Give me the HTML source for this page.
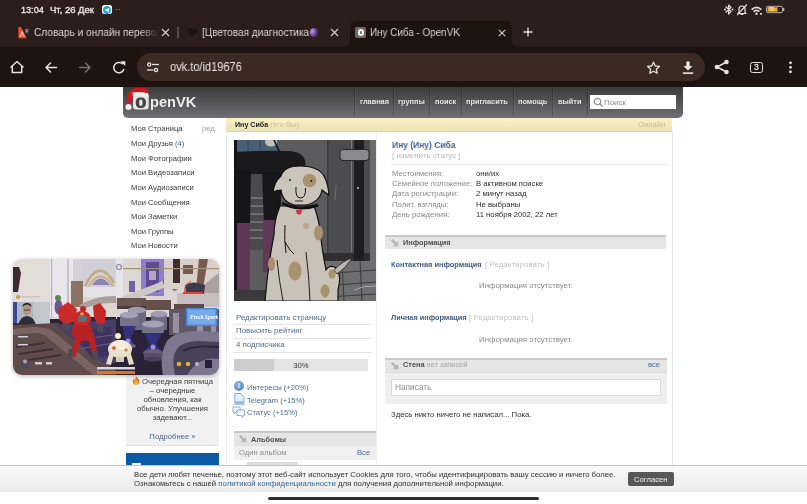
<!DOCTYPE html>
<html><head><meta charset="utf-8">
<style>
*{margin:0;padding:0;box-sizing:border-box}
html,body{width:807px;height:504px;overflow:hidden;background:#fff;font-family:"Liberation Sans",sans-serif;position:relative;-webkit-font-smoothing:antialiased}
.t{will-change:transform}
.r{position:absolute;display:block}
.t{position:absolute;white-space:nowrap;line-height:12px}
.tabt{color:#ddd4d0;line-height:13px;overflow:hidden}
</style></head><body>
<div class="r" style="left:0px;top:0px;width:807px;height:47px;background:#2c1f1b;"></div>
<div class="r" style="left:0px;top:46.6px;width:807px;height:40.4px;background:#1d1310;"></div>
<div class="r" style="left:350px;top:21px;width:162px;height:26px;background:#1d1310;border-radius:6px 6px 0 0"></div>
<svg class="r" style="left:343px;top:39px" width="8" height="8"><path d="M0 8 Q7 8 7 0 L8 0 L8 8 Z" fill="#1d1310"/></svg>
<svg class="r" style="left:511px;top:39px" width="8" height="8"><path d="M8 8 Q1 8 1 0 L0 0 L0 8 Z" fill="#1d1310"/></svg>
<div class="t" style="left:20.5px;top:3.95px;font-size:9.1px;color:#ece6e3;-webkit-text-stroke:0.35px #ece6e3">13:04</div>
<div class="t" style="left:50.0px;top:3.81px;font-size:9.5px;color:#ece6e3;-webkit-text-stroke:0.35px #ece6e3">Чт, 26 Дек</div>
<div class="r" style="left:102px;top:5px;width:10px;height:9px;border-radius:2.5px;background:#fff"></div>
<div class="r" style="left:103px;top:5.5px;width:8px;height:8px;border-radius:50%;background:#2a9fd8"></div>
<svg class="r" style="left:103px;top:5.5px" width="8" height="8"><path d="M1.5 4 L6.5 2 L5.6 6.3 L3.7 5 Z" fill="#fff"/></svg>
<div class="r" style="left:116px;top:8.8px;width:1.3px;height:1.3px;background:#aaa;border-radius:50%"></div>
<div class="r" style="left:119.2px;top:8.8px;width:1.3px;height:1.3px;background:#aaa;border-radius:50%"></div>
<svg class="r" style="left:723px;top:3px" width="64" height="13" viewBox="0 0 64 13">
<g stroke="#e6e0dd" stroke-width="1.2" fill="none" stroke-linecap="round" stroke-linejoin="round">
<path d="M3 4 L8 8.5 L5.5 11 L5.5 2 L8 4.5 L3 9"/>
<circle cx="2" cy="6.5" r="0.4" fill="#e6e0dd"/><circle cx="9.5" cy="6.5" r="0.4" fill="#e6e0dd"/>
<path d="M16 9.5 L16 6 Q16 3 19 3 Q22 3 22 6 L22 9.5 L23 10.5 L15 10.5 Z M18 11.5 L20 11.5"/>
<path d="M23.5 2 L14.5 11.5"/>
</g>
<g fill="#e6e0dd">
<path d="M28 6 Q33.5 1 39 6 L37.8 7.2 Q33.5 3.5 29.2 7.2 Z"/>
<path d="M30 8 Q33.5 5 37 8 L35.8 9.2 Q33.5 7.3 31.2 9.2 Z"/>
<circle cx="33.5" cy="10.8" r="1.2"/>
<rect x="37" y="10" width="2" height="1.6"/>
</g>
<rect x="43.5" y="3.3" width="16" height="6.4" rx="1.5" fill="none" stroke="#b8b0ac" stroke-width="1"/>
<rect x="44.5" y="4.3" width="10" height="4.4" fill="#f0a81c"/>
<rect x="60" y="5" width="1.3" height="3" fill="#b8b0ac"/>
<text x="46" y="8.3" font-size="4.5" fill="#fff2d0" font-family="Liberation Sans" font-weight="bold">72</text>
</svg>
<svg class="r" style="left:17px;top:27px" width="13" height="12" viewBox="0 0 13 12">
<path d="M1.4 0 L3.9 0 L9.8 11.2 L1.4 11.2 Z" fill="#ee4a2c"/>
<path d="M3 10 L5.2 4.5 L7.4 10 M3.9 8 L6.5 8" stroke="#fbe0d8" stroke-width="0.8" fill="none"/>
<rect x="7.9" y="1.7" width="3.8" height="4.9" fill="#3a3a3e"/>
<path d="M8.4 2.8 H11.2 M9.8 2.2 V5.8 M8.5 4.5 Q9.8 5.5 11.2 4.2" stroke="#d8d8dc" stroke-width="0.5" fill="none"/>
</svg>
<div class="t tabt" style="left:33.5px;top:26.2px;width:138px;font-size:11.2px;transform:scaleX(0.905);transform-origin:0 0;-webkit-mask-image:linear-gradient(90deg,#000 85%,transparent)">Словарь и онлайн перевод</div>
<svg class="r" style="left:161px;top:28px" width="9" height="9"><path d="M1 1 L8 8 M8 1 L1 8" stroke="#d5ccc8" stroke-width="1.2"/></svg>
<div class="r" style="left:177px;top:27px;width:1.5px;height:11px;background:#5b4b45;"></div>
<svg class="r" style="left:187px;top:27px" width="11" height="11"><path d="M5.5 10 L1 5 Q0 2 2.5 1.5 Q4.5 1.2 5.5 3 Q6.5 1.2 8.5 1.5 Q11 2 10 5 Z" fill="#1c1412" stroke="#241a17" stroke-width="0.6"/></svg>
<div class="t tabt" style="left:202px;top:26.2px;width:138px;font-size:11.1px;transform:scaleX(0.905);transform-origin:0 0;-webkit-mask-image:linear-gradient(90deg,#000 88%,transparent)">[Цветовая диагностика<span style="display:inline-block;width:9px;height:9px;border-radius:50%;background:radial-gradient(circle at 35% 35%,#c9a3ef,#6a3fb0 60%,#3a2060);vertical-align:-1px;margin-left:1px"></span></div>
<svg class="r" style="left:330px;top:28px" width="9" height="9"><path d="M1 1 L8 8 M8 1 L1 8" stroke="#d5ccc8" stroke-width="1.2"/></svg>
<div class="r" style="left:355px;top:27px;width:11px;height:11px;background:#6b6b6b;border-radius:2px"></div>
<div class="r" style="left:357.5px;top:29.3px;width:6px;height:6.4px;border:2px solid #f4f4f4;border-radius:50%"></div>
<div class="t tabt" style="left:369.5px;top:26.2px;font-size:10.9px;transform:scaleX(0.905);transform-origin:0 0">Ину Сиба - OpenVK</div>
<svg class="r" style="left:498px;top:28.5px" width="8" height="8"><path d="M0.8 0.8 L7.2 7.2 M7.2 0.8 L0.8 7.2" stroke="#d5ccc8" stroke-width="1.1"/></svg>
<svg class="r" style="left:523px;top:27px" width="10" height="10"><path d="M5 0.5 V9.5 M0.5 5 H9.5" stroke="#e6dfdb" stroke-width="1.3"/></svg>
<div class="r" style="left:137px;top:53px;width:568px;height:28px;border-radius:14px;background:#3b2a24"></div>
<svg class="r" style="left:0;top:48px" width="140" height="40">
<g fill="none" stroke="#e8e1dd" stroke-width="1.5" stroke-linejoin="round" stroke-linecap="round">
<path d="M11 19 L17 13.5 L23 19 M12.3 18 V24.5 H21.7 V18"/>
<path d="M56.5 19.5 H46 M50.5 15 L46 19.5 L50.5 24"/>
<path d="M79.5 19.5 H90 M85.5 15 L90 19.5 L85.5 24" stroke="#7b6f6a"/>
<path d="M123.8 21.5 A5.2 5.2 0 1 1 122.5 15.8"/>
</g>
<path d="M120.5 13.2 L125.3 13.2 L125.3 18 Z" fill="#e8e1dd"/>
</svg>
<svg class="r" style="left:146px;top:62px" width="14" height="11">
<g stroke="#e8e1dd" stroke-width="1.3" fill="none">
<circle cx="3.2" cy="2.5" r="1.6"/><path d="M6 2.5 H13"/>
<circle cx="10" cy="8" r="1.6"/><path d="M1 8 H7.3"/>
</g></svg>
<div class="t" style="left:170.3px;top:60.8px;font-size:12.4px;color:#ebe4e0;line-height:13px;transform:scaleX(0.89);transform-origin:0 0">ovk.to/id19676</div>
<svg class="r" style="left:646px;top:61px" width="15" height="14" viewBox="0 0 15 14">
<path d="M7.5 1.2 L9.3 5 L13.4 5.4 L10.3 8.2 L11.2 12.3 L7.5 10.2 L3.8 12.3 L4.7 8.2 L1.6 5.4 L5.7 5 Z" fill="none" stroke="#e8e1dd" stroke-width="1.3" stroke-linejoin="round"/>
</svg>
<svg class="r" style="left:682px;top:60px" width="12" height="15">
<path d="M4.3 1.5 H7.7 V6 H10.5 L6 10.5 L1.5 6 H4.3 Z" fill="#e8e1dd"/>
<rect x="0.8" y="12.3" width="10.4" height="1.6" fill="#e8e1dd"/>
</svg>
<svg class="r" style="left:714px;top:59px" width="16" height="16">
<g fill="#e8e1dd"><circle cx="12.5" cy="3" r="2.3"/><circle cx="3" cy="8" r="2.3"/><circle cx="12.5" cy="13" r="2.3"/></g>
<path d="M12.5 3 L3 8 L12.5 13" stroke="#e8e1dd" stroke-width="1.5" fill="none"/>
</svg>
<div class="r" style="left:749.5px;top:61.5px;width:13px;height:11.5px;border:1.4px solid #e8e1dd;border-radius:2.5px"></div>
<div class="t" style="left:749.5px;top:61.2px;width:13px;text-align:center;font-size:8.6px;color:#e8e1dd;line-height:12px;-webkit-text-stroke:0.3px #e8e1dd">3</div>
<svg class="r" style="left:788px;top:60px" width="5" height="15"><g fill="#e8e1dd"><circle cx="2.5" cy="2.8" r="1.4"/><circle cx="2.5" cy="7.3" r="1.4"/><circle cx="2.5" cy="11.8" r="1.4"/></g></svg>
<div class="r" style="left:0px;top:87px;width:807px;height:417px;background:#ffffff;"></div>
<div class="r" style="left:123px;top:87px;width:560px;height:30.5px;background:linear-gradient(#3b3b3b,#5a5a5c 60%,#707074);border-radius:0 0 5px 5px"></div>
<svg class="r" style="left:124px;top:87px" width="30" height="26" viewBox="0 0 30 26">
<rect x="9" y="6.5" width="15.7" height="16" rx="3" fill="#e6e6e6"/>
<rect x="11.8" y="10.4" width="10.1" height="10.6" rx="4.2" fill="#424242"/>
<rect x="15.2" y="12.6" width="3.3" height="6.1" rx="1.5" fill="#e6e6e6"/>
<path d="M2.5 19 Q2 5 9 1.8 Q16 0 21.5 1.2 Q25 2.5 24 7.5 L9.5 8 Q7 12 6 18 Z" fill="#d4151e"/>
<path d="M8.5 5.5 Q16 4.3 24.3 6.5 L24.5 10 Q16 8 8.8 9.3 Z" fill="#eeeeee"/>
<circle cx="4.5" cy="20" r="3" fill="#f4f4f4"/>
</svg>
<div class="t" style="left:149.5px;top:96.44px;font-size:14.6px;color:#ececec;font-weight:bold;">penVK</div>
<div class="r" style="left:354px;top:87px;width:1px;height:29px;background:rgba(0,0,0,0.2);"></div>
<div class="r" style="left:355px;top:87px;width:1px;height:29px;background:rgba(255,255,255,0.06);"></div>
<div class="r" style="left:393px;top:87px;width:1px;height:29px;background:rgba(0,0,0,0.2);"></div>
<div class="r" style="left:394px;top:87px;width:1px;height:29px;background:rgba(255,255,255,0.06);"></div>
<div class="r" style="left:429px;top:87px;width:1px;height:29px;background:rgba(0,0,0,0.2);"></div>
<div class="r" style="left:430px;top:87px;width:1px;height:29px;background:rgba(255,255,255,0.06);"></div>
<div class="r" style="left:461px;top:87px;width:1px;height:29px;background:rgba(0,0,0,0.2);"></div>
<div class="r" style="left:462px;top:87px;width:1px;height:29px;background:rgba(255,255,255,0.06);"></div>
<div class="r" style="left:513px;top:87px;width:1px;height:29px;background:rgba(0,0,0,0.2);"></div>
<div class="r" style="left:514px;top:87px;width:1px;height:29px;background:rgba(255,255,255,0.06);"></div>
<div class="r" style="left:552px;top:87px;width:1px;height:29px;background:rgba(0,0,0,0.2);"></div>
<div class="r" style="left:553px;top:87px;width:1px;height:29px;background:rgba(255,255,255,0.06);"></div>
<div class="r" style="left:587px;top:87px;width:1px;height:29px;background:rgba(0,0,0,0.2);"></div>
<div class="r" style="left:588px;top:87px;width:1px;height:29px;background:rgba(255,255,255,0.06);"></div>
<div class="t" style="left:359.5px;top:96.45px;font-size:7.35px;color:#e4e4e4;font-weight:bold;">главная</div>
<div class="t" style="left:398.0px;top:96.45px;font-size:7.35px;color:#e4e4e4;font-weight:bold;">группы</div>
<div class="t" style="left:434.7px;top:96.45px;font-size:7.35px;color:#e4e4e4;font-weight:bold;">поиск</div>
<div class="t" style="left:465.9px;top:96.45px;font-size:7.35px;color:#e4e4e4;font-weight:bold;">пригласить</div>
<div class="t" style="left:517.6px;top:96.45px;font-size:7.35px;color:#e4e4e4;font-weight:bold;">помощь</div>
<div class="t" style="left:557.7px;top:96.45px;font-size:7.35px;color:#e4e4e4;font-weight:bold;">выйти</div>
<div class="r" style="left:590px;top:95px;width:86px;height:14px;background:#ffffff;"></div>
<svg class="r" style="left:592.5px;top:97px" width="11" height="11"><circle cx="4.5" cy="4.5" r="3.2" fill="none" stroke="#9a9a9a" stroke-width="1.3"/><path d="M6.8 6.8 L9.8 9.8" stroke="#9a9a9a" stroke-width="1.5"/></svg>
<div class="t" style="left:604.0px;top:97.06px;font-size:7.9px;color:#8c8c8c;">Поиск</div>
<div class="t" style="left:130.6px;top:123.45px;font-size:7.65px;color:#3a3a3a;">Моя Страница</div>
<div class="t" style="left:130.6px;top:138.07px;font-size:7.65px;color:#3a3a3a;">Мои Друзья <span style="color:#45688e">(4)</span></div>
<div class="t" style="left:130.6px;top:152.69px;font-size:7.65px;color:#3a3a3a;">Мои Фотографии</div>
<div class="t" style="left:130.6px;top:167.31px;font-size:7.65px;color:#3a3a3a;">Мои Видеозаписи</div>
<div class="t" style="left:130.6px;top:181.93px;font-size:7.65px;color:#3a3a3a;">Мои Аудиозаписи</div>
<div class="t" style="left:130.6px;top:196.55px;font-size:7.65px;color:#3a3a3a;">Мои Сообщения</div>
<div class="t" style="left:130.6px;top:211.17px;font-size:7.65px;color:#3a3a3a;">Мои Заметки</div>
<div class="t" style="left:130.6px;top:225.79px;font-size:7.65px;color:#3a3a3a;">Мои Группы</div>
<div class="t" style="left:130.6px;top:240.41px;font-size:7.65px;color:#3a3a3a;">Мои Новости</div>
<div class="t" style="left:201.8px;top:123.45px;font-size:7.65px;color:#a0a0a0;">ред.</div>
<div class="r" style="left:126px;top:350px;width:93px;height:96px;background:#f1f1f1;border-bottom:1px solid #e2e2e2"></div>
<div class="t" style="left:126px;width:93px;text-align:center;top:375.90px;font-size:7.7px;color:#3c3c3c"><svg width="8" height="9" style="vertical-align:-1px;margin-right:2px" viewBox="0 0 8 9"><path d="M4 0.3 Q7.5 3.5 7.3 5.8 Q7 8.7 4 8.7 Q1 8.7 0.7 5.8 Q0.6 3.8 2.2 2.6 Q2.3 4.2 3.2 4.6 Q3 2.2 4 0.3 Z" fill="#f07a1a"/><path d="M4 4.2 Q5.8 6 5.6 7 Q5.3 8.5 4 8.5 Q2.7 8.5 2.5 7.2 Q2.5 6 4 4.2 Z" fill="#fcc838"/></svg>Очередная пятница</div>
<div class="t" style="left:126px;width:93px;text-align:center;top:385.20px;font-size:7.7px;color:#3c3c3c">– очередные</div>
<div class="t" style="left:126px;width:93px;text-align:center;top:394.10px;font-size:7.7px;color:#3c3c3c">обновления, как</div>
<div class="t" style="left:126px;width:93px;text-align:center;top:403.00px;font-size:7.7px;color:#3c3c3c">обычно. Улучшения</div>
<div class="t" style="left:126px;width:93px;text-align:center;top:412.00px;font-size:7.7px;color:#3c3c3c">задевают...</div>
<div class="t" style="left:126px;width:93px;text-align:center;top:430.80px;font-size:7.7px;color:#45688e">Подробнее »</div>
<div class="r" style="left:126px;top:453px;width:93px;height:13px;background:#0b5aa6;"></div>
<div class="r" style="left:132px;top:463px;width:9px;height:3px;background:#eef3fa;"></div>
<div class="r" style="left:226px;top:117.5px;width:446px;height:14.800000000000011px;background:linear-gradient(#f9f2c6,#ece2b2);"></div>
<div class="r" style="left:226px;top:131.3px;width:446px;height:1.0px;background:#e0d6a6;"></div>
<div class="r" style="left:226px;top:132px;width:1px;height:334px;background:#e8ecf1;"></div>
<div class="r" style="left:672px;top:132px;width:1px;height:334px;background:#e0e6ec;"></div>
<div class="t" style="left:234.6px;top:119.34px;font-size:7.1px;color:#222;font-weight:bold;">Ину Сиба</div>
<div class="t" style="left:270.2px;top:119.17px;font-size:7.6px;color:#c6bf98;">(это Вы)</div>
<div class="t" style="left:637.5px;top:119.17px;font-size:7.6px;color:#c6bd8c;">Онлайн</div>
<div class="r" style="left:376px;top:132px;width:1px;height:334px;background:#f0f0f0;"></div>
<div class="r" style="left:234px;top:140px;width:142px;height:161px"><svg width="142" height="161" viewBox="0 0 142 161">
<rect width="142" height="161" fill="#5c5c5e"/>
<!-- floor right -->
<path d="M80 122 L142 118 V161 H80 Z" fill="#6e6e70"/>
<path d="M86 134 L142 130 M90 146 L142 142 M94 157 L142 154 M108 122 L110 161 M126 120 L128 161" stroke="#3a3a3c" stroke-width="1"/>
<path d="M120 150 Q130 145 142 146" stroke="#bbb" stroke-width="0.8" fill="none"/>
<!-- door -->
<rect x="93" y="0" width="43" height="120" fill="#4c4c4e"/>
<rect x="93" y="0" width="1.5" height="120" fill="#3a3a3c"/>
<rect x="88" y="113" width="48" height="8" fill="#2e2e30"/>
<rect x="120" y="0" width="10" height="121" fill="#1e1e20"/>
<rect x="117" y="0" width="1" height="112" fill="#7a7a7c"/>
<rect x="106" y="9.5" width="29" height="11" rx="3" fill="#8a8a8c" stroke="#262626" stroke-width="1"/>
<rect x="136" y="0" width="6" height="118" fill="#6c6c6e"/>
<circle cx="124" cy="48" r="0.9" fill="#ddd"/>
<path d="M102 45 L101 60" stroke="#888" stroke-width="0.6"/>
<!-- person -->
<rect x="0" y="0" width="46" height="27" fill="#4a5f74"/>
<path d="M14 0 V22 M26 0 V20" stroke="#33465a" stroke-width="1"/>
<ellipse cx="37" cy="2" rx="6" ry="4.5" fill="#c4c0b8"/>
<path d="M40 0 L54 30" stroke="#141414" stroke-width="1.6"/>
<path d="M0 12 Q30 10 55 11 Q71 12 71.5 24 Q71 33 62 35 L0 36 Z" fill="#1a1a1c"/>
<rect x="16" y="34" width="14" height="76" fill="#4a4a4c"/>
<path d="M16 58 H30 M16 66 H30 M16 74 H30 M16 82 H30 M16 90 H30 M16 98 H30" stroke="#7a7a7c" stroke-width="1.3"/>
<path d="M0 30 H17 L16 84 H0 Z" fill="#161618"/>
<path d="M28 32 H48 L46 86 L30 86 Z" fill="#18181a"/>
<!-- boots -->
<path d="M2 83 H16 L16 154 H2 Z" fill="#5e3658"/>
<path d="M29 80 H45 L42 110 L38 132 L29 132 Z" fill="#603858"/>
<path d="M0 0 V161" stroke="#141414" stroke-width="6"/>
<rect x="0" y="150" width="40" height="11" fill="#3a3a3c"/>
<!-- dog body -->
<path d="M46 66 Q40 80 40 95 Q34 125 31 161 H104 L104 150 Q108 135 102 128 Q96 124 92 130 Q88 110 86 90 Q84 76 80 66 Z" fill="#c8c2b8" stroke="#111" stroke-width="1.2"/>
<path d="M100 130 Q110 120 118 118 Q112 128 103 134 Z" fill="#bab6b0" stroke="#222" stroke-width="0.8"/>
<ellipse cx="84.5" cy="93" rx="4.5" ry="7.5" fill="#a8926e"/>
<ellipse cx="37.5" cy="124" rx="3.5" ry="7" fill="#a8926e"/>
<ellipse cx="61" cy="131" rx="6.5" ry="9.5" fill="#a8926e"/>
<ellipse cx="98" cy="134" rx="3.5" ry="4.5" fill="#a8926e"/>
<ellipse cx="91" cy="151" rx="4.5" ry="6.5" fill="#a8926e"/>
<ellipse cx="72" cy="86" rx="3" ry="3" fill="#b8a88c"/>
<path d="M51 85 Q50 100 52 113 M51 102 L56 110 L60 114" stroke="#111" stroke-width="1" fill="none"/>
<path d="M43 120 Q45 140 49 161 M72 112 Q75 135 76 161" stroke="#111" stroke-width="0.9" fill="none"/>
<!-- head -->
<path d="M47 36 Q50 26 66 26 Q86 26 91 38 Q94 44 95 55 Q90 52 88 50 Q86 62 72 65 L60 65 Q48 62 47 50 Q43 50 39 52 Q40 42 47 36 Z" fill="#cac4ba" stroke="#111" stroke-width="1.2"/>
<circle cx="75.5" cy="40.5" r="6.8" fill="#a8926e"/>
<circle cx="56" cy="40" r="0.9" fill="#111"/>
<circle cx="77.4" cy="41" r="0.9" fill="#111"/>
<path d="M62 47 Q61 58 66.5 58 Q72 58 71.5 48" stroke="#111" stroke-width="1" fill="none"/>
<path d="M61 61 H69" stroke="#111" stroke-width="0.9"/>
<path d="M48 63 Q65 72 84 65" stroke="#111" stroke-width="3" fill="none"/>
<path d="M62 70 L68 70 Q68 74 65 75 Q62 74 62 70 Z" fill="#c83a4c"/>
</svg>
</div>
<div class="t" style="left:391.8px;top:139.22px;font-size:8.9px;color:#43628a;font-weight:bold;transform:scaleX(0.955);transform-origin:0 0">Ину (Ину) Сиба</div>
<div class="t" style="left:391.8px;top:150.36px;font-size:7.9px;color:#b9b9b9;">[ изменить статус ]</div>
<div class="r" style="left:391px;top:164px;width:276px;height:1px;background:#e8e8e8;"></div>
<div class="t" style="left:391.8px;top:167.53px;font-size:7.72px;color:#8a8a8a;">Местоимения:</div>
<div class="t" style="left:476.4px;top:167.53px;font-size:7.7px;color:#2e2e2e;">они/их</div>
<div class="t" style="left:391.8px;top:177.98px;font-size:7.72px;color:#8a8a8a;">Семейное положение:</div>
<div class="t" style="left:476.4px;top:177.98px;font-size:7.7px;color:#2e2e2e;">В активном поиске</div>
<div class="t" style="left:391.8px;top:188.43px;font-size:7.72px;color:#8a8a8a;">Дата регистрации:</div>
<div class="t" style="left:476.4px;top:188.43px;font-size:7.7px;color:#2e2e2e;">2 минут назад</div>
<div class="t" style="left:391.8px;top:198.88px;font-size:7.72px;color:#8a8a8a;">Полит. взгляды:</div>
<div class="t" style="left:476.4px;top:198.88px;font-size:7.7px;color:#2e2e2e;">Не выбраны</div>
<div class="t" style="left:391.8px;top:209.33px;font-size:7.72px;color:#8a8a8a;">День рождения:</div>
<div class="t" style="left:476.4px;top:209.33px;font-size:7.7px;color:#2e2e2e;">11 ноября 2002, 22 лет</div>
<div class="r" style="left:385px;top:235px;width:281px;height:1.5px;background:#c9c9c9;"></div>
<div class="r" style="left:385px;top:236.5px;width:281px;height:12.5px;background:#e5e5e5;"></div>
<svg class="r" style="left:390.5px;top:238.5px" width="8" height="8"><path d="M0.8 0.8 L4.8 4.8" stroke="#b4b4b4" stroke-width="2.4"/><path d="M7.2 1.8 V7.2 H1.8 Z" fill="#b4b4b4"/></svg>
<div class="t" style="left:402.6px;top:237.25px;font-size:7.35px;color:#505050;font-weight:bold;">Информация</div>
<div class="t" style="left:391.4px;top:258.94px;font-size:7.4px;color:#3f5d83;font-weight:bold;">Контактная информация</div>
<div class="t" style="left:484.8px;top:258.73px;font-size:8.0px;color:#c2c2c2;">[ Редактировать ]</div>
<div class="t" style="left:478.5px;top:279.98px;font-size:7.85px;color:#8a8a8a;">Информация отсутствует.</div>
<div class="t" style="left:391.4px;top:312.46px;font-size:7.33px;color:#3f5d83;font-weight:bold;">Личная информация</div>
<div class="t" style="left:469.3px;top:312.23px;font-size:8.0px;color:#c2c2c2;">[ Редактировать ]</div>
<div class="t" style="left:478.5px;top:333.68px;font-size:7.85px;color:#8a8a8a;">Информация отсутствует.</div>
<div class="r" style="left:385px;top:358px;width:281.5px;height:1.5px;background:#c9c9c9;"></div>
<div class="r" style="left:385px;top:359.5px;width:281.5px;height:13.0px;background:#e5e5e5;"></div>
<svg class="r" style="left:390.5px;top:361.5px" width="8" height="8"><path d="M0.8 0.8 L4.8 4.8" stroke="#b4b4b4" stroke-width="2.4"/><path d="M7.2 1.8 V7.2 H1.8 Z" fill="#b4b4b4"/></svg>
<div class="r" style="left:385px;top:372.5px;width:281.5px;height:31.5px;background:#efefef;"></div>
<div class="r" style="left:385px;top:372px;width:281.5px;height:1px;background:#dcdcdc;"></div>
<div class="r" style="left:391px;top:378.5px;width:270px;height:17.5px;background:#fff;border:1px solid #d4d9e0;border-radius:1px"></div>
<div class="t" style="left:395.0px;top:381.42px;font-size:8.3px;color:#8d8d8d;">Написать</div>
<div class="t" style="left:402.6px;top:359.35px;font-size:7.35px;color:#505050;font-weight:bold;">Стена <span style="font-weight:normal;color:#a6a6a6">нет записей</span></div>
<div class="t" style="left:648.4px;top:359.23px;font-size:7.7px;color:#4a6a90;">все</div>
<div class="t" style="left:391.4px;top:408.72px;font-size:7.74px;color:#2e2e2e;">Здесь никто ничего не написал... Пока.</div>
<div class="t" style="left:235.9px;top:311.57px;font-size:7.88px;color:#4f6b8c;">Редактировать страницу</div>
<div class="r" style="left:233px;top:324.3px;width:138px;height:1.0px;background:#e4e4e4;"></div>
<div class="t" style="left:235.9px;top:325.47px;font-size:7.88px;color:#4f6b8c;">Повысить рейтинг</div>
<div class="r" style="left:233px;top:337.8px;width:138px;height:1.0px;background:#e4e4e4;"></div>
<div class="t" style="left:235.9px;top:339.27px;font-size:7.88px;color:#4f6b8c;">4 подписчика</div>
<div class="r" style="left:233px;top:352.3px;width:138px;height:1.0px;background:#e4e4e4;"></div>
<div class="r" style="left:234px;top:359px;width:134px;height:12px;background:#e4e4e4;"></div>
<div class="r" style="left:234px;top:359px;width:39.5px;height:12px;background:#cdcdcd;"></div>
<div class="t" style="left:234px;width:134px;text-align:center;top:360.00px;font-size:7.7px;color:#333">30%</div>
<div class="r" style="left:234.2px;top:381.4px;width:10.2px;height:10px;border-radius:50%;background:radial-gradient(circle at 40% 35%,#8fb3e0,#4a7cc0)"></div>
<div class="t" style="left:234px;width:10.3px;text-align:center;top:380.3px;font-size:7.5px;font-weight:bold;color:#f0f4fa;line-height:12px">i</div>
<div class="t" style="left:246.8px;top:381.68px;font-size:7.56px;color:#4f6b8c;">Интересы (+20%)</div>
<svg class="r" style="left:234px;top:393.2px" width="11" height="12"><path d="M0.8 0.5 H6.8 L10 3.7 V11.3 H0.8 Z" fill="#e4eefa" stroke="#7aa2d4" stroke-width="0.9"/><rect x="1.3" y="8.2" width="8.2" height="2.6" fill="#8fb8ea"/></svg>
<div class="t" style="left:246.8px;top:394.58px;font-size:7.56px;color:#4f6b8c;">Telegram (+15%)</div>
<svg class="r" style="left:232px;top:406px" width="14" height="12"><path d="M1 1 H8 V6 H4 L2 8 V6 H1 Z" fill="#fff" stroke="#7ea3d0" stroke-width="0.9"/><path d="M5 4 H12.5 V9.5 H11 V11.5 L9 9.5 H5 Z" fill="#f4f8fd" stroke="#7ea3d0" stroke-width="0.9"/></svg>
<div class="t" style="left:246.8px;top:407.08px;font-size:7.56px;color:#4f6b8c;">Статус (+15%)</div>
<div class="r" style="left:233.5px;top:431px;width:142.5px;height:1.5px;background:#c9c9c9;"></div>
<div class="r" style="left:233.5px;top:432.5px;width:142.5px;height:13.0px;background:#e5e5e5;"></div>
<svg class="r" style="left:239.0px;top:434.5px" width="8" height="8"><path d="M0.8 0.8 L4.8 4.8" stroke="#b4b4b4" stroke-width="2.4"/><path d="M7.2 1.8 V7.2 H1.8 Z" fill="#b4b4b4"/></svg>
<div class="t" style="left:250.8px;top:434.15px;font-size:7.35px;color:#505050;font-weight:bold;">Альбомы</div>
<div class="r" style="left:233.5px;top:445.5px;width:142.5px;height:14.5px;background:#f0f0f0;"></div>
<div class="r" style="left:233.5px;top:445px;width:142.5px;height:1px;background:#dedede;"></div>
<div class="t" style="left:239.3px;top:447.45px;font-size:7.65px;color:#8d8d8d;">Один альбом</div>
<div class="t" style="left:356.8px;top:447.45px;font-size:7.65px;color:#4f6b8c;">Все</div>
<div class="r" style="left:247px;top:462px;width:51px;height:4px;background:#dcdcdc;"></div>
<div class="r" style="left:13px;top:259px;width:206px;height:116px;border-radius:9px;overflow:hidden;box-shadow:0 1px 4px rgba(0,0,0,0.3)"><svg width="206" height="116" viewBox="0 0 206 116">
<defs><filter id="bl"><feGaussianBlur stdDeviation="0.5"/></filter></defs>
<g filter="url(#bl)">
<rect width="206" height="116" fill="#2c2432"/>
<!-- upper light area -->
<rect x="-2" y="-2" width="210" height="62" fill="#dcd7d4"/>
<rect x="0" y="0" width="40" height="45" fill="#e2ddd9"/>
<rect x="37" y="0" width="25" height="58" fill="#e9e7eb"/>
<rect x="38" y="0" width="1.2" height="58" fill="#b8b4bc"/>
<rect x="54" y="0" width="2" height="58" fill="#c6c2ca"/>
<rect x="58" y="22" width="12" height="26" fill="#8c7262"/>
<rect x="60" y="0" width="10" height="22" fill="#d4d0d8"/>
<path d="M70 0 H102 V28 H70 Z" fill="#d2ced8"/>
<path d="M72 27 Q86 -2 101 24" stroke="#c2aa7a" stroke-width="2.5" fill="none"/>
<path d="M76 27 Q87 8 100 27" stroke="#c8b282" stroke-width="2" fill="none"/>
<path d="M79 26 Q87 13 97 26 Z" fill="#8a84b0"/>
<rect x="70" y="28" width="33" height="10" fill="#e4e2e6"/>
<path d="M66 46 Q85 36 103 37 L103 44 Q86 43 70 50 Z" fill="#aaa0a0"/>
<rect x="103" y="0" width="7" height="40" fill="#e6e4e8"/>
<circle cx="106" cy="8" r="2.5" fill="none" stroke="#8a8890" stroke-width="1.2"/>
<rect x="116" y="22" width="6" height="11" fill="#7060a8"/>
<rect x="128" y="0" width="23" height="37" fill="#8e7ece"/>
<rect x="133" y="3" width="13" height="30" fill="#5e4c92"/>
<rect x="136" y="12" width="7" height="9" fill="#b4a6c0"/>
<path d="M103 40 Q130 30 150 22 Q160 18 166 30 L162 34 Q156 26 148 30 Q125 40 103 46 Z" fill="#cfc7c6"/>
<path d="M150 20 Q160 20 165 30 L161 32 Q157 25 150 25 Z" fill="#5a6aa8"/>
<rect x="151" y="0" width="55" height="30" fill="#d8d0c9"/>
<rect x="160" y="0" width="7" height="24" fill="#3c2e30"/>
<rect x="170" y="6" width="10" height="9" fill="#7a5a50"/>
<path d="M186 0 L195 0 L190 30 L183 30 Z" fill="#7a5a50"/>
<path d="M178 40 Q194 22 206 14 V36 Q196 40 188 48 Z" fill="#aaa2a2"/>
<rect x="110" y="9" width="96" height="1.2" fill="#a0907c"/>
<rect x="164" y="34" width="42" height="14" fill="#c6bebe"/>
<path d="M172 26 Q180 21 192 26 L191 35 L173 35 Z" fill="#3a3a48"/>
<path d="M170 34 L190 34" stroke="#e04040" stroke-width="2"/>
<path d="M172 35 Q170 26 178 22" stroke="#d84040" stroke-width="1" fill="none"/>
<path d="M0 8 H6 L8 14 L5 33 H0 Z" fill="#3c2c34"/>
<rect x="5" y="37" width="22" height="1.5" fill="#c8c4c4"/>
<circle cx="5" cy="38" r="2" fill="#c8a040"/>
<!-- tables -->
<rect x="104" y="39" width="29" height="10" fill="#6a5450"/>
<rect x="129" y="41" width="29" height="10" fill="#66504c"/>
<rect x="161" y="45" width="30" height="8" fill="#5e4a48"/>
<rect x="104" y="47" width="29" height="3" fill="#4a3a3c"/>
<!-- webcam -->
<rect x="0" y="43" width="37" height="24" fill="#aeb6c2"/>
<rect x="20" y="43" width="17" height="24" fill="#c4c6cc"/>
<rect x="0" y="43" width="4" height="24" fill="#3a4a9a"/>
<ellipse cx="14" cy="51" rx="4.2" ry="5.2" fill="#b89080"/>
<path d="M9.5 48 Q14 43 18.5 48 L18 45.5 Q14 42 10 45.5 Z" fill="#2a2222"/>
<path d="M11 51 H17" stroke="#333" stroke-width="0.8"/>
<path d="M5 67 Q7 57 14 57 Q21 57 23 67 Z" fill="#2e2e34"/>
<ellipse cx="45.5" cy="48" rx="4" ry="7.5" fill="#6a5a92"/>
<circle cx="45" cy="39" r="3" fill="#5a8a4a"/>
<!-- lower scene -->
<path d="M0 64 L37 66 L50 58 L103 58 L103 116 H0 Z" fill="#2e2432"/>
<path d="M0 66 L45 64 L103 112 L103 116 H0 Z" fill="#5c4a4a"/>
<path d="M0 70 L20 68 Q32 68 40 72 L92 116 H0 Z" fill="#7a6460"/>
<path d="M0 76 L22 74 Q30 74 34 78 L80 116 H0 Z" fill="#5e4c4c"/>
<path d="M3 88 L32 84 M6 95 L40 90 M9 102 L48 96" stroke="#3c3036" stroke-width="2.2"/>
<path d="M42 66 L103 60 L103 104 L90 104 Z" fill="#483c6c"/>
<path d="M58 72 L98 68 L100 96 L80 100 Z" fill="#3e325e"/>
<path d="M66 90 L100 84 M70 80 L100 76" stroke="#6a5a8a" stroke-width="1"/>
<!-- red robot -->
<path d="M58 72 L62 80 L57 97 L62 99 L68 82 L76 82 L80 100 L85 99 L82 80 L80 72 Z" fill="#b82226"/>
<path d="M56 90 L60 90 L59 100 L54 100 Z M79 92 L84 92 L86 101 L80 101 Z" fill="#4a4a54"/>
<ellipse cx="69" cy="60" rx="9" ry="8" fill="#c8282c"/>
<path d="M60 66 L78 66 L80 76 L58 76 Z" fill="#b42024"/>
<circle cx="70" cy="50" r="3" fill="#c02428"/>
<path d="M45 50 L55 43 L64 50 L62 62 L52 66 L46 60 Z" fill="#cc2a2c"/>
<path d="M80 47 L87 44 L93 52 L92 64 L85 66 L81 58 Z" fill="#c82628"/>
<path d="M50 64 L58 66 L56 72 L48 70 Z" fill="#4c4c56"/>
<path d="M84 64 L90 66 L90 74 L84 72 Z" fill="#4c4c56"/>
<rect x="65" y="57" width="9" height="6" fill="#6a6a72"/>
<circle cx="69" cy="55" r="1.8" fill="#f0a030"/>
<!-- hourglasses -->
<rect x="104" y="58" width="52" height="48" fill="#2a2438"/>
<rect x="115" y="51" width="18" height="20" fill="#6e6a80"/>
<ellipse cx="124" cy="51" rx="9" ry="3.2" fill="#a09cb4"/>
<rect x="138" y="55" width="16" height="16" fill="#6e6a80"/>
<ellipse cx="146" cy="55" rx="8.5" ry="3.2" fill="#a09cb4"/>
<rect x="107" y="56" width="18" height="11" fill="#76728a"/>
<ellipse cx="116" cy="56" rx="9" ry="3.2" fill="#a4a0b8"/>
<path d="M109 67 L123 67 L118 80 L122 86 L108 86 L112 80 Z" fill="#30307a"/>
<ellipse cx="115" cy="87" rx="8" ry="3" fill="#6a5c80"/>
<circle cx="115" cy="82" r="2.5" fill="#9a8ae0"/>
<rect x="129" y="65" width="22" height="9" fill="#76728a"/>
<ellipse cx="140" cy="65" rx="11" ry="3.5" fill="#a4a0b8"/>
<path d="M131 74 L149 74 L143 86 L149 92 L131 92 L137 86 Z" fill="#30307a"/>
<ellipse cx="140" cy="94" rx="10" ry="4" fill="#6a5c80"/>
<rect x="131" y="94" width="18" height="7" fill="#5a4e6a"/>
<circle cx="140" cy="88" r="2.5" fill="#9a8ae0"/>
<ellipse cx="140" cy="100" rx="9" ry="2.5" fill="#4a4058"/>
<!-- cream robot -->
<path d="M93 105 L97 92 L101 95 L98 106 Z M121 105 L117 92 L113 95 L116 106 Z" fill="#e8dcc6"/>
<ellipse cx="107" cy="90" rx="12" ry="9" fill="#ece2cc"/>
<ellipse cx="107" cy="86" rx="8" ry="5" fill="#f6eedc"/>
<circle cx="101" cy="89" r="2" fill="#d87040"/>
<circle cx="113" cy="91" r="1.5" fill="#d87040"/>
<circle cx="105" cy="77" r="3" fill="#f8f2d0"/>
<rect x="103" y="98" width="8" height="5" fill="#d8ccb8"/>
<!-- right wall -->
<rect x="156" y="50" width="50" height="26" fill="#5e5866"/>
<rect x="160" y="54" width="6" height="20" fill="#9890a0"/>
<rect x="184" y="56" width="6" height="18" fill="#9890a0"/>
<rect x="198" y="56" width="5" height="18" fill="#9890a0"/>
<!-- big platform -->
<path d="M150 116 Q146 95 154 82 Q162 72 182 72 L206 73 V116 Z" fill="#7c768e"/>
<path d="M162 116 Q158 98 164 90 Q170 82 186 82 L206 83 V100 Q186 97 174 116 Z" fill="#46425a"/>
<path d="M170 92 Q180 86 206 88" stroke="#2a2838" stroke-width="2" fill="none"/>
<!-- fresh spark -->
<rect x="173" y="49" width="31" height="18" fill="#4e86d8"/>
<rect x="174.5" y="50.5" width="28" height="15" fill="#78aaea"/>
<text x="177" y="60" font-size="5.5" fill="#fff" font-family="Liberation Serif" font-style="italic" font-weight="bold">Fresh Spark</text>
<!-- HUD -->
<rect x="84" y="108" width="38" height="2.5" fill="#d4d8e2"/>
<rect x="84" y="112" width="38" height="3" fill="#e8701c"/>
<circle cx="12" cy="104" r="4.5" fill="#4a4a66"/>
<circle cx="12" cy="102.5" r="2" fill="#c0a090"/>
<rect x="22" y="103" width="7" height="2.5" fill="#c8c8d0"/>
<rect x="33" y="103" width="6" height="2.5" fill="#c8c8d0"/>
<rect x="5" y="77" width="10" height="1.5" fill="#d0d0d8"/>
<rect x="5" y="85" width="10" height="1.5" fill="#d0d0d8"/>
<circle cx="166" cy="105" r="2.3" fill="#d8b030"/>
<circle cx="175" cy="105" r="2.3" fill="#d8b030"/>
<circle cx="184" cy="105" r="2" fill="#b8b8c8"/>
<rect x="192" y="101" width="7" height="8" fill="#222230"/>
</g>
</svg>
</div>
<div class="r" style="left:0;top:465px;width:807px;height:27px;background:linear-gradient(#f9f9f9,#ebebeb);border-top:1px solid #c4c4c4"></div>
<div class="t" style="left:134.4px;top:468.61px;font-size:7.76px;color:#333;">Все дети любят печенье, поэтому этот веб-сайт использует Cookies для того, чтобы идентифицировать вашу сессию и ничего более.</div>
<div class="t" style="left:134.4px;top:477.80px;font-size:7.78px;color:#333;">Ознакомьтесь с нашей <span style="color:#3f6a95">политикой конфиденциальности</span> для получения дополнительной информации.</div>
<div class="r" style="left:628px;top:472.3px;width:45.5px;height:14px;background:#575757;border-radius:2px"></div>
<div class="t" style="left:628px;width:45.5px;text-align:center;top:474.20px;font-size:7.65px;color:#f2f2f2">Согласен</div>
<div class="r" style="left:268px;top:496.8px;width:271px;height:3px;border-radius:1.5px;background:#2e2e2e"></div>

</body></html>
